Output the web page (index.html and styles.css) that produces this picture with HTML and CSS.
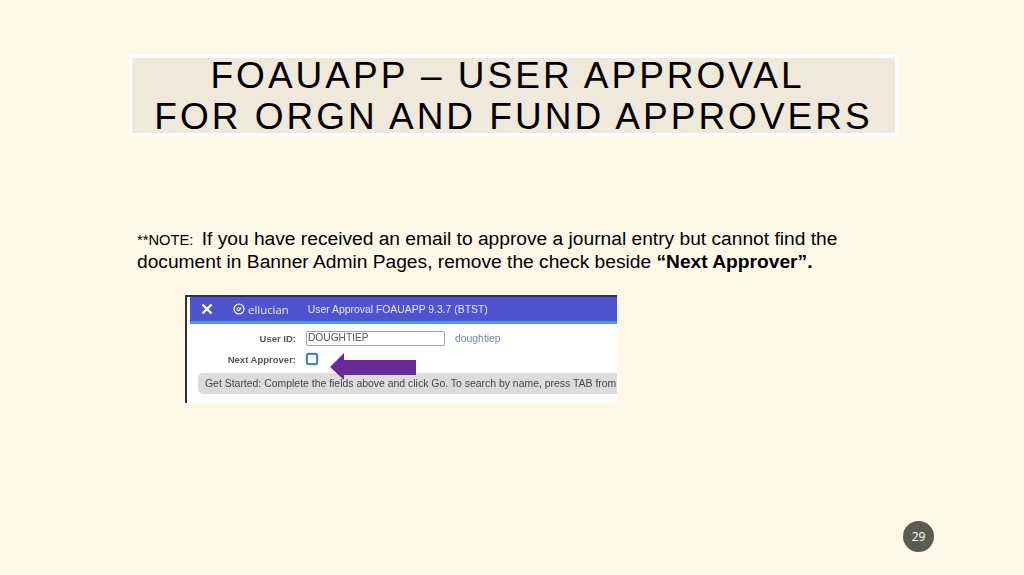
FILE: index.html
```html
<!DOCTYPE html>
<html lang="en">
<head>
    <meta charset="UTF-8">
    <meta name="viewport" content="width=device-width, initial-scale=1.0">
    <title>FOAUAPP - User Approval</title>
    <link rel="stylesheet" href="styles.css">
</head>
<body>
    <div class="slide">
        <h1 class="title"><span class="title-text">FOAUAPP – USER APPROVAL <br>FOR ORGN AND FUND APPROVERS</span></h1>
        <p class="note"><span class="note-label">**NOTE:</span> If you have received an email to approve a journal entry but cannot find the document in Banner Admin Pages, remove the check beside <b>“Next Approver”.</b></p>

        <div class="shot">
            <div class="shot-bar">
                <svg class="close-icon" width="12" height="12" viewBox="0 0 12 12"><path d="M1.5 1.5l9 9M10.5 1.5l-9 9" stroke="#fff" stroke-width="2.4" fill="none"/></svg>
                <svg class="logo-icon" width="12" height="12" viewBox="0 0 12 12"><circle cx="6" cy="6" r="5" stroke="#fff" stroke-width="1.2" fill="none"/><path d="M8 4.2C7.6 7 6.4 8 5 7.8 3.6 7.4 3.8 5 5.2 4.6 6.4 4.3 7 5.4 6.2 6.4" stroke="#fff" stroke-width="1" fill="none"/></svg>
                <span class="logo-text">ellucian</span>
                <span class="bar-title">User Approval FOAUAPP 9.3.7 (BTST)</span>
            </div>
            <div class="shot-form">
                <div class="form-row">
                    <label class="form-label">User ID:</label>
                    <div class="text-input">DOUGHTIEP</div>
                    <span class="user-name">doughtiep</span>
                </div>
                <div class="form-row check-row">
                    <label class="form-label">Next Approver:</label>
                    <div class="checkbox"></div>
                </div>
                <div class="hint">Get Started: Complete the fields above and click Go. To search by name, press TAB from</div>
            </div>
            <svg class="arrow" width="86" height="27" viewBox="0 0 86 27"><path d="M0 14L14 0V7H86V22H14V27Z" fill="#6a2a9c"/></svg>
        </div>

        <div class="page-row"><span class="page-num">29</span></div>
    </div>
</body>
</html>
```

FILE: styles.css
```css
body {
    margin: 0;
    background-color: #fef8e7;
    font-family: "Liberation Sans", Arial, sans-serif;
    color: #000;
}

.slide {
    width: 1024px;
    height: 575px;
    padding: 55px 126px 0 129px;
    box-sizing: border-box;
    overflow: hidden;
}

.title {
    margin: 0;
    height: 81px;
    box-sizing: border-box;
    border: 3px solid #fff;
    background-color: #eee9d8;
    font-size: 37px;
    font-weight: normal;
    line-height: 41px;
    letter-spacing: 3px;
    text-align: center;
    white-space: pre;
}

.title-text {
    display: block;
    margin-top: -3px;
}

.note {
    margin: 91px 0 0 8px;
    width: 720px;
    font-size: 19.2px;
    line-height: 23px;
}

.note-label {
    margin-right: 3px;
    font-size: 14.7px;
    line-height: 0;
}

.shot {
    position: relative;
    width: 432px;
    height: 108px;
    margin: 22px 0 0 56px;
    box-sizing: border-box;
    padding: 0 0 0 3px;
    border-top: 2px solid #333;
    border-left: 2px solid #333;
    background-color: #fff;
    box-shadow: 0 0 4px #fffdf5;
    overflow: hidden;
    font-size: 10.4px;
    color: #444;
    filter: blur(0.4px);
}

.shot-bar {
    display: flex;
    align-items: center;
    height: 27px;
    box-sizing: border-box;
    border-bottom: 3px solid #4a9ae0;
    background-color: #4f53cf;
    color: #e8e8f8;
}

.close-icon {
    margin-left: 11px;
}

.logo-icon {
    margin-left: 20px;
}

.logo-text {
    margin-left: 3px;
    font-family: "Open Sans", sans-serif;
    font-size: 11.4px;
}

.bar-title {
    margin-left: 19px;
}

.shot-form {
    padding-top: 6px;
}

.form-row {
    display: flex;
    align-items: center;
    height: 16px;
}

.check-row {
    margin-top: 7px;
    height: 12px;
}

.form-label {
    width: 106px;
    text-align: right;
    font-size: 9.5px;
    font-weight: bold;
    color: #555;
}

.text-input {
    width: 139px;
    height: 15px;
    margin-left: 10px;
    box-sizing: border-box;
    padding-left: 1px;
    border: 1px solid #9aa5ad;
    border-radius: 2px;
    line-height: 12px;
    font-size: 10.2px;
    color: #555;
}

.user-name {
    margin-left: 10px;
    color: #6d87a8;
}

.checkbox {
    width: 12px;
    height: 12px;
    margin-left: 10px;
    border: 2px solid #4f84ad;
    border-radius: 2px;
    box-sizing: border-box;
    box-shadow: 0 0 2px #7fb0d0;
}

.arrow {
    position: absolute;
    left: 143px;
    top: 56px;
}

.hint {
    height: 21px;
    margin-top: 8px;
    margin-left: 8px;
    padding-left: 7px;
    border-radius: 5px 0 0 5px;
    background-color: #dcdcdc;
    font-size: 10.45px;
    line-height: 21px;
    white-space: nowrap;
}

.page-row {
    display: flex;
    justify-content: flex-end;
    margin: 118px -36px 0 0;
}

.page-num {
    width: 31px;
    height: 31px;
    border-radius: 50%;
    background-color: #5b5b52;
    color: #fff;
    font-family: "Open Sans", sans-serif;
    font-size: 12px;
    line-height: 31px;
    text-align: center;
}
```
